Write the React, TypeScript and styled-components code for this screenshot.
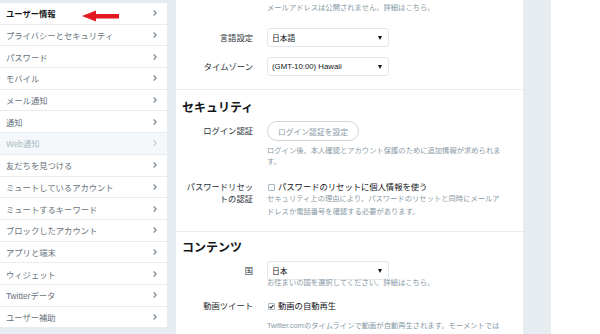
import React from "react";
import styled, { createGlobalStyle } from "styled-components";

const GlobalStyle = createGlobalStyle`
  html, body {
    margin: 0;
    padding: 0;
    background: #e6ecf0;
  }
  body {
    font-family: "Liberation Sans", "Noto Sans CJK JP", sans-serif;
    color: #14171a;
  }
`;

const Page = styled.div`
  display: flex;
  width: 600px;
  height: 334px;
  overflow: hidden;
  background: #e6ecf0;
`;

const Sidebar = styled.nav`
  position: relative;
  width: 167px;
  padding-top: 3px;
  flex-shrink: 0;
`;

const NavRow = styled.div<{ $active?: boolean; $muted?: boolean }>`
  box-sizing: border-box;
  height: 21.7px;
  display: flex;
  align-items: center;
  justify-content: space-between;
  padding: 0 6px;
  background: ${(p) => (p.$muted ? "#f5f8fa" : "#fff")};
  border-bottom: 1px solid #e6ecf0;
  font-size: 8.3px;
  font-weight: ${(p) => (p.$active ? 700 : 400)};
  color: ${(p) => (p.$active ? "#14171a" : p.$muted ? "#aab8c2" : "#66717a")};
  white-space: nowrap;
`;

const Chevron = styled.svg<{ $muted?: boolean }>`
  width: 4px;
  height: 6px;
  margin-right: 4px;
  stroke: ${(p) => (p.$muted ? "#c5ced5" : "#7d8a94")};
`;

const RedArrow = styled.svg`
  position: absolute;
  left: 82px;
  top: 10px;
  width: 38px;
  height: 12px;
`;

const Main = styled.main`
  width: 347px;
  margin-left: 9px;
  background: #fff;
  flex-shrink: 0;
`;

const Section = styled.section<{ $last?: boolean }>`
  padding: 0 10px 0 6px;
  border-bottom: ${(p) => (p.$last ? "none" : "1px solid #e6ecf0")};
`;

const Heading = styled.h2<{ $top: number }>`
  margin: ${(p) => p.$top}px 0 0;
  font-size: 12px;
  line-height: 16px;
  font-weight: 700;
  color: #14171a;
`;

const Field = styled.div<{ $top: number; $center?: boolean }>`
  display: grid;
  grid-template-columns: 71px 1fr;
  column-gap: 14px;
  align-items: ${(p) => (p.$center ? "center" : "start")};
  margin-top: ${(p) => p.$top}px;
`;

const Label = styled.div<{ $lh?: number }>`
  text-align: right;
  font-size: 8.3px;
  line-height: ${(p) => p.$lh ?? 12}px;
  color: #292f33;
  white-space: nowrap;
`;

const Help = styled.p<{ $top?: number; $lh?: number }>`
  margin: ${(p) => p.$top ?? 0}px 0 0;
  font-size: 7.3px;
  line-height: ${(p) => p.$lh ?? 11}px;
  color: #8899a6;
  white-space: nowrap;
`;

const Select = styled.div`
  box-sizing: border-box;
  width: 122px;
  height: 19px;
  display: flex;
  align-items: center;
  justify-content: space-between;
  padding: 0 6px 0 4px;
  border: 1px solid #e1e8ed;
  border-radius: 3px;
  font-size: 7.8px;
  color: #14171a;
`;

const Caret = styled.span`
  width: 0;
  height: 0;
  border-left: 2.5px solid transparent;
  border-right: 2.5px solid transparent;
  border-top: 4px solid #14171a;
`;

const PillButton = styled.div`
  box-sizing: border-box;
  width: 92px;
  height: 20px;
  display: flex;
  align-items: center;
  justify-content: center;
  border: 1px solid #ccd6dd;
  border-radius: 10px;
  font-size: 7.8px;
  color: #8899a6;
  white-space: nowrap;
`;

const CheckLine = styled.label`
  display: flex;
  align-items: center;
  gap: 3px;
  padding-left: 1px;
  font-size: 8.3px;
  line-height: 12px;
  color: #14171a;
  white-space: nowrap;
`;

const Box = styled.span`
  box-sizing: border-box;
  width: 7px;
  height: 7px;
  border: 1px solid #aab8c2;
  border-radius: 1px;
  background: #fff;
  display: inline-flex;
  align-items: center;
  justify-content: center;
`;

const Gutter = styled.div`
  width: 28px;
  flex-shrink: 0;
`;

const RightColumn = styled.div`
  flex: 1;
  background: #fff;
`;

const navItems = [
  "ユーザー情報",
  "プライバシーとセキュリティ",
  "パスワード",
  "モバイル",
  "メール通知",
  "通知",
  "Web通知",
  "友だちを見つける",
  "ミュートしているアカウント",
  "ミュートするキーワード",
  "ブロックしたアカウント",
  "アプリと端末",
  "ウィジェット",
  "Twitterデータ",
  "ユーザー補助",
];

const Checkbox = ({ checked }: { checked?: boolean }) => (
  <Box>
    {checked && (
      <svg width="5" height="5" viewBox="0 0 5 5">
        <path d="M0.6 2.6 L2 4 L4.4 1" fill="none" stroke="#14171a" strokeWidth="1.1" />
      </svg>
    )}
  </Box>
);

const App = () => {
  return (
    <>
      <GlobalStyle />
      <Page>
        <Sidebar>
          {navItems.map((item, i) => {
            const muted = item === "Web通知";
            return (
              <NavRow key={item} $active={i === 0} $muted={muted}>
                <span>{item}</span>
                <Chevron $muted={muted} viewBox="0 0 4 6" fill="none" strokeWidth="1.2">
                  <path d="M0.6 0.5 L3.2 3 L0.6 5.5" />
                </Chevron>
              </NavRow>
            );
          })}
          <RedArrow viewBox="0 0 38 12">
            <path d="M0 6 L14 0.5 L14 4 L37 4 L37 8.5 L14 8.5 L14 11.5 Z" fill="#e3191f" />
          </RedArrow>
        </Sidebar>

        <Main>
          <Section>
            <Field $top={2}>
              <span />
              <Help>メールアドレスは公開されません。詳細はこちら。</Help>
            </Field>
            <Field $top={15} $center>
              <Label>言語設定</Label>
              <Select>
                <span>日本語</span>
                <Caret />
              </Select>
            </Field>
            <Field $top={10} $center>
              <Label>タイムゾーン</Label>
              <Select>
                <span>(GMT-10:00) Hawaii</span>
                <Caret />
              </Select>
            </Field>
            <div style={{ height: 13 }} />
          </Section>

          <Section>
            <Heading $top={10}>セキュリティ</Heading>
            <Field $top={5} $center>
              <Label>ログイン認証</Label>
              <PillButton>ログイン認証を設定</PillButton>
            </Field>
            <Field $top={4}>
              <span />
              <Help>
                ログイン後、本人確認とアカウント保護のために追加情報が求められま
                <br />
                す。
              </Help>
            </Field>
            <Field $top={14}>
              <Label>
                パスワードリセッ
                <br />
                トの認証
              </Label>
              <div>
                <CheckLine>
                  <Checkbox />
                  パスワードのリセットに個人情報を使う
                </CheckLine>
                <Help $lh={12.5}>
                  セキュリティ上の理由により、パスワードのリセットと同時にメールア
                  <br />
                  ドレスか電話番号を確認する必要があります。
                </Help>
              </div>
            </Field>
            <div style={{ height: 13 }} />
          </Section>

          <Section $last>
            <Heading $top={8}>コンテンツ</Heading>
            <Field $top={5} $center>
              <Label>国</Label>
              <Select>
                <span>日本</span>
                <Caret />
              </Select>
            </Field>
            <Field $top={-2}>
              <span />
              <Help $lh={10}>お住まいの国を選択してください。詳細はこちら。</Help>
            </Field>
            <Field $top={12}>
              <Label>動画ツイート</Label>
              <div>
                <CheckLine>
                  <Checkbox checked />
                  動画の自動再生
                </CheckLine>
                <Help $top={8} $lh={12}>
                  Twitter.comのタイムラインで動画が自動再生されます。モーメントでは
                </Help>
              </div>
            </Field>
          </Section>
        </Main>

        <Gutter />
        <RightColumn />
      </Page>
    </>
  );
};

export default App;
